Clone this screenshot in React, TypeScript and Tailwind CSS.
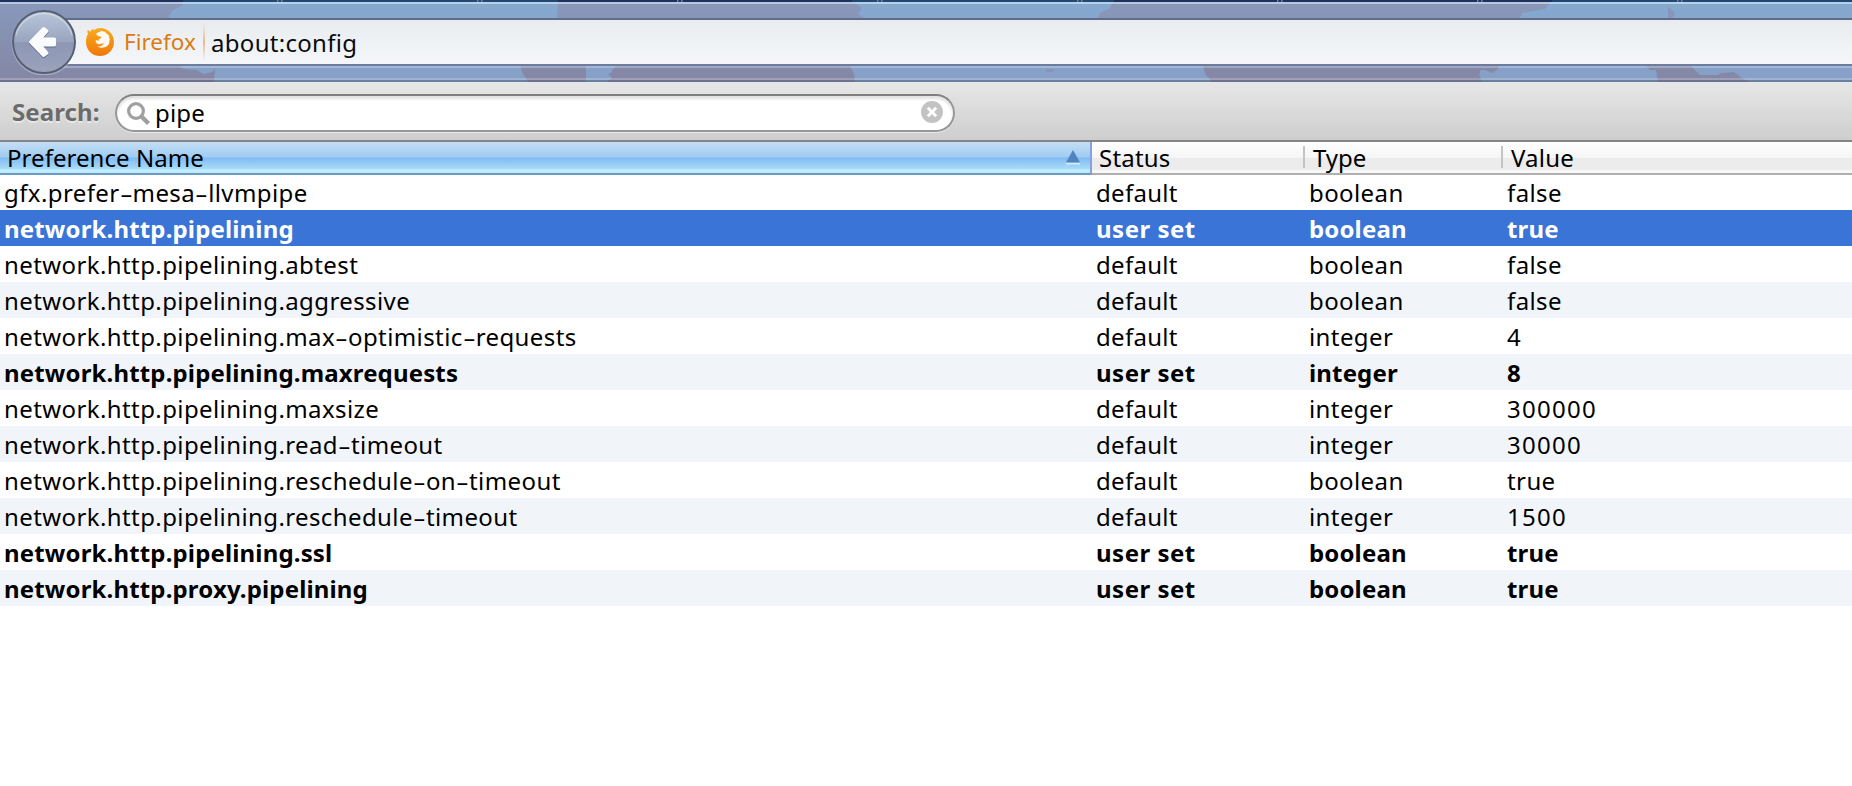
import { Fragment } from "react";

type Pref = {
  name: string;
  type: "boolean" | "integer";
  value: string;
  userSet?: boolean;
  selected?: boolean;
};

const prefs: Pref[] = [
  { name: "gfx.prefer-mesa-llvmpipe", type: "boolean", value: "false" },
  { name: "network.http.pipelining", type: "boolean", value: "true", userSet: true, selected: true },
  { name: "network.http.pipelining.abtest", type: "boolean", value: "false" },
  { name: "network.http.pipelining.aggressive", type: "boolean", value: "false" },
  { name: "network.http.pipelining.max-optimistic-requests", type: "integer", value: "4" },
  { name: "network.http.pipelining.maxrequests", type: "integer", value: "8", userSet: true },
  { name: "network.http.pipelining.maxsize", type: "integer", value: "300000" },
  { name: "network.http.pipelining.read-timeout", type: "integer", value: "30000" },
  { name: "network.http.pipelining.reschedule-on-timeout", type: "boolean", value: "true" },
  { name: "network.http.pipelining.reschedule-timeout", type: "integer", value: "1500" },
  { name: "network.http.pipelining.ssl", type: "boolean", value: "true", userSet: true },
  { name: "network.http.proxy.pipelining", type: "boolean", value: "true", userSet: true },
];

const columns = "grid grid-cols-[1092px_212px_198px_1fr]";

function PersonaBackground() {
  return (
    <svg className="absolute inset-0" width="1852" height="82" viewBox="0 0 1852 82" preserveAspectRatio="none">
      <defs>
        <linearGradient id="sea" x1="0" y1="0" x2="0" y2="82" gradientUnits="userSpaceOnUse">
          <stop offset="0" stopColor="#85a9cf" />
          <stop offset="1" stopColor="#869fc6" />
        </linearGradient>
        <linearGradient id="land" x1="0" y1="0" x2="0" y2="82" gradientUnits="userSpaceOnUse">
          <stop offset="0" stopColor="#8899bc" />
          <stop offset="1" stopColor="#8486a4" />
        </linearGradient>
      </defs>
      <rect width="1852" height="82" fill="url(#sea)" />
      <g fill="url(#land)">
        <path d="M0 0H183V5L172 11L168 18L172 40L176 64L184 69L196 70L204 74L212 72L215 68L214 82H0Z" />
        <path d="M558 0H851L862 8L858 14L864 18L850 40V66L854 74L855 82H607L612 78L608 74L618 64H586V82H528L522 72L520 64L557 20Z" />
        <path d="M1114 0H1552L1545 9L1522 13L1520 18L1518 50L1500 64L1497 70L1492 73L1485 70L1479 74L1482 82H1212L1206 75L1202 64L1130 44L1098 18L1100 13L1110 8Z" />
        <path d="M1668 6L1673 11L1675 14L1672 18H1668Z" />
        <path d="M1644 64H1690L1694 69L1700 75H1718L1721 73L1734 72L1740 77L1750 82H1658L1656 70L1650 70Z" />
        <rect x="1046" y="69" width="7" height="3" opacity="0.5" />
      </g>
      <g fill="url(#sea)">
        <path d="M606 69L612 66V72L607 75Z" />
        <rect x="1480" y="70" width="4" height="4" />
      </g>
      <rect width="1852" height="2" fill="#1d4a75" />
      <path d="M0 0H183V2H0ZM558 0H852V2H558ZM1114 0H1552V2H1114Z" fill="#1b3360" />
      <g fill="#6d8099">
        {[278, 478, 678, 878, 1078, 1278, 1478, 1678].map((x) => (
          <Fragment key={x}>
            <rect x={x - 1} width="1.5" height="2" />
            <rect x={x + 3} width="1.5" height="2" />
          </Fragment>
        ))}
      </g>
      <rect y="2" width="1852" height="2" fill="#fff" opacity="0.45" />
      <rect y="78" width="1852" height="2" fill="#fff" opacity="0.22" />
      <rect y="80" width="1852" height="2" fill="#4d5f7d" opacity="0.5" />
    </svg>
  );
}

function FirefoxLogo() {
  return (
    <svg width="28" height="28" viewBox="0 0 84 84">
      <defs>
        <linearGradient id="fox" x1="0" y1="0" x2="0" y2="1">
          <stop offset="0" stopColor="#f9ab1b" />
          <stop offset="1" stopColor="#f0770c" />
        </linearGradient>
      </defs>
      <path
        d="M5 5L13 11C15 6 19 4 23 3L22 8C29 2 37 0 45 0C68 2 84 20 84 42C84 66 65 84 42 84C18 84 0 66 0 42C0 30 3 22 6 17C4 13 4 9 5 5Z"
        fill="url(#fox)"
      />
      <path
        d="M45 9C53 9 60 13 63 18C68 20 70 24 70 30C72 33 71 36 70 39C71 47 66 55 58 57C50 61 40 60 33 55C40 57 46 54 50 50L54 47C48 45 42 52 34 47C29 44 27 39 30 37C33 36 36 38 38 39C37 34 41 32 45 30L46 26L36 24C33 22 32 20 30 18C32 15 36 13 40 13Z"
        fill="#fdf9f3"
      />
    </svg>
  );
}

function BackButton() {
  return (
    <svg width="66" height="66" viewBox="0 0 66 66" className="relative shrink-0">
      <defs>
        <linearGradient id="btn" x1="0" y1="0" x2="0" y2="1">
          <stop offset="0" stopColor="#bac6da" />
          <stop offset="0.5" stopColor="#99a5bf" />
          <stop offset="0.51" stopColor="#8d97b4" />
          <stop offset="1" stopColor="#9ba3bc" />
        </linearGradient>
      </defs>
      <circle cx="33" cy="34" r="31.5" fill="none" stroke="#fff" strokeOpacity="0.3" strokeWidth="2" />
      <circle cx="33" cy="33" r="31" fill="url(#btn)" stroke="#575f74" strokeWidth="2" />
      <path d="M5 26A29 29 0 0 1 61 26" fill="none" stroke="#fff" strokeOpacity="0.35" strokeWidth="1.5" />
      <path
        d="M19.5 34L32.5 20.5L36 23L29 31H43.5V37H29L36 45L32.5 47.5Z"
        fill="#4b556d"
        stroke="#4b556d"
        strokeWidth="3"
        strokeLinejoin="round"
        opacity="0.7"
      />
      <path
        d="M19.5 33L32.5 19.5L36 22L29 30H43.5V36H29L36 44L32.5 46.5Z"
        fill="#fafbfd"
        stroke="#fafbfd"
        strokeWidth="3"
        strokeLinejoin="round"
      />
    </svg>
  );
}

function Toolbar() {
  return (
    <header className="relative h-[82px] overflow-hidden">
      <PersonaBackground />
      <div className="relative flex h-full items-start pl-[11px] pt-[9px]">
        <div className="z-10 h-[66px]">
          <BackButton />
        </div>
        <div className="-ml-[14px] mt-[9px] flex h-[48px] flex-1 items-center border-y-2 border-t-[#5f6d8a] border-b-[#6d7d9f] bg-linear-to-b from-[#e9ebef] via-[#eff2f5] to-[#f4f6fa] bg-clip-padding pl-[23px] shadow-[0_2px_0_rgba(255,255,255,0.25)]">
          <FirefoxLogo />
          <span className="ml-[10px] w-[79px] text-[22.5px] text-[#dc7a14]">Firefox</span>
          <span className="h-[38px] w-[2px] bg-linear-to-b from-transparent via-[#eab88a] to-transparent" />
          <span className="relative top-px ml-[6px] text-[24px] tracking-[0.3px] text-[#0b0b0d]">about:config</span>
        </div>
      </div>
    </header>
  );
}

function SearchBar() {
  return (
    <div className="flex h-[60px] items-start border-b-2 border-[#858585] bg-linear-to-b from-[#e7e7e7] to-[#cecece] pl-[12px] pt-[12px]">
      <label className="w-[103px] text-[24px] font-bold leading-[36px] tracking-[0.1px] text-[#6b6b6b] [text-shadow:0_2px_0_rgba(255,255,255,0.45)]">
        Search:
      </label>
      <div className="flex h-[38px] w-[840px] items-center rounded-full border-2 border-[#979797] border-t-[#808080] bg-white pl-[9px] pr-[10px] shadow-[inset_0_3px_3px_rgba(0,0,0,0.12),0_1px_0_rgba(255,255,255,0.5)]">
        <svg width="26" height="26" viewBox="0 0 26 26" fill="none" stroke="#a0a0a0">
          <circle cx="10" cy="11" r="7.4" strokeWidth="3.2" />
          <path d="M15.5 16.5L22.5 23.5" strokeWidth="4.4" />
        </svg>
        <span className="ml-[3px] flex-1 text-[24px] leading-[32px] tracking-[0.2px] text-black">pipe</span>
        <svg width="22" height="22" viewBox="0 0 22 22" className="mb-0.5">
          <circle cx="11" cy="11" r="11" fill="#c3c3c3" />
          <path d="M6.8 6.8L15.2 15.2M15.2 6.8L6.8 15.2" stroke="#fff" strokeWidth="3" />
        </svg>
      </div>
    </div>
  );
}

const plainHeader =
  "bg-[linear-gradient(to_bottom,#ffffff_0%,#f6f6f6_50%,#ebebeb_51%,#ececec_88%,#f8f8f8_92%,#f8f8f8_100%)] border-[#b0b0b0]";

function HeaderRow() {
  return (
    <div className="grid h-[32px] grid-cols-[1092px_211px_198px_1fr] text-[24px] leading-[31px] text-black">
      <div className="flex items-center border-b-2 border-r-2 border-b-[#6c9bc4] border-r-[#8b9fdc] bg-[linear-gradient(to_bottom,#c4def5_0%,#a0ccf2_48%,#82bbf3_52%,#a5daf8_85%,#c8effc_92%,#b4e4fa_100%)] pl-[7px] pr-[10px]">
        <span className="flex-1 tracking-[0.05px]">Preference Name</span>
        <svg width="14" height="15" viewBox="0 0 14 15" className="mb-px">
          <path d="M0 12.5H14V14.5H0Z" fill="#d4ecfb" />
          <path d="M7 0L14 12.5H0Z" fill="#4f83c1" />
        </svg>
      </div>
      <div className={`border-b-2 pl-[7px] tracking-[0.2px] ${plainHeader}`}>Status</div>
      <div className={`flex items-center border-b-2 ${plainHeader}`}>
        <span className="mb-0.5 h-[22px] w-[2px] bg-[#c4c4c4]" />
        <span className="ml-[8px]">Type</span>
      </div>
      <div className={`flex items-center border-b-2 ${plainHeader}`}>
        <span className="mb-0.5 h-[22px] w-[2px] bg-[#c4c4c4]" />
        <span className="ml-[8px] tracking-[0.2px]">Value</span>
      </div>
    </div>
  );
}

function PrefName({ name }: { name: string }) {
  return (
    <>
      {name.split("-").map((part, i) => (
        <Fragment key={i}>
          {i > 0 && <span className="inline-block w-[13px] scale-x-[1.65] text-center tracking-normal">-</span>}
          {part}
        </Fragment>
      ))}
    </>
  );
}

function PrefRow({ pref, index }: { pref: Pref; index: number }) {
  const background = pref.selected ? "bg-[#3974d6]" : index % 2 === 1 ? "bg-[#f1f5fa]" : "bg-white";
  const text = pref.selected ? "text-white" : "text-black";
  const weight = pref.userSet ? "font-bold tracking-[0.15px]" : "tracking-[0.4px]";
  const status = pref.userSet ? "tracking-[0.5px]" : "tracking-[0.3px]";
  const digits = /^\d+$/.test(pref.value) ? "tracking-[1.25px]" : "";
  return (
    <div className={`${columns} h-[36px] whitespace-nowrap text-[24px] leading-[38px] ${background} ${text} ${weight}`}>
      <div className="pl-[4px]">
        <PrefName name={pref.name} />
      </div>
      <div className={`pl-[4px] ${status}`}>{pref.userSet ? "user set" : "default"}</div>
      <div className="pl-[5px]">{pref.type}</div>
      <div className={`pl-[5px] ${digits}`}>{pref.value}</div>
    </div>
  );
}

export default function App() {
  return (
    <div className="min-h-[786px] w-full overflow-hidden bg-white font-['Noto_Sans',sans-serif]">
      <Toolbar />
      <SearchBar />
      <HeaderRow />
      <main>
        {prefs.map((pref, index) => (
          <PrefRow key={pref.name} pref={pref} index={index} />
        ))}
      </main>
    </div>
  );
}
